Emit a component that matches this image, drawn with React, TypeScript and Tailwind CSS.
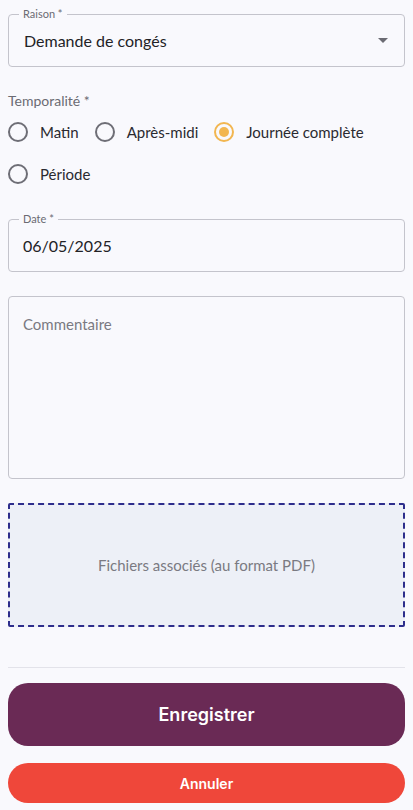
import { useState } from "react";

const font = "font-['Lato','Noto_Sans',sans-serif]";

function OutlinedField({ label, children, className = "" }: { label: string; children: React.ReactNode; className?: string }) {
  return (
    <div className={`relative rounded border border-[#c4c4cc] ${className}`}>
      <span className="absolute -top-[8px] left-[10px] bg-[#f9f9fd] px-[4px] text-[11px] leading-[14px] text-[#6b6b73]">
        {label}
      </span>
      {children}
    </div>
  );
}

function Radio({ label, checked, onClick }: { label: string; checked: boolean; onClick: () => void }) {
  return (
    <button type="button" onClick={onClick} className="flex items-center gap-[12px]">
      <span
        className={`flex h-[20px] w-[20px] items-center justify-center rounded-full border-2 ${
          checked ? "border-[#f2b650]" : "border-[#6e6e76]"
        }`}
      >
        {checked && <span className="h-[10px] w-[10px] rounded-full bg-[#f2b650]" />}
      </span>
      <span className="text-[15px] text-[#2a2a30]">{label}</span>
    </button>
  );
}

export default function App() {
  const [period, setPeriod] = useState("full");
  const options = [
    { id: "am", label: "Matin" },
    { id: "pm", label: "Après-midi" },
    { id: "full", label: "Journée complète" },
    { id: "range", label: "Période" },
  ];

  return (
    <div className={`min-h-[810px] bg-[#f9f9fd] px-[8px] pt-[14px] ${font}`}>
      <OutlinedField label="Raison *" className="h-[53px]">
        <div className="flex h-full items-center justify-between pl-[15px] pr-[16px]">
          <span className="text-[16px] text-[#222226]">Demande de congés</span>
          <svg width="10" height="5" viewBox="0 0 10 5">
            <path d="M0 0h10L5 5z" fill="#6b6b73" />
          </svg>
        </div>
      </OutlinedField>

      <div className="mt-[25px] text-[14px] leading-[18px] text-[#6b6b73]">Temporalité *</div>
      <div className="mt-[11px] flex flex-wrap gap-x-[16px] gap-y-[19px]">
        {options.map((o) => (
          <Radio key={o.id} label={o.label} checked={period === o.id} onClick={() => setPeriod(o.id)} />
        ))}
      </div>

      <OutlinedField label="Date *" className="mt-[34px] h-[53px]">
        <div className="flex h-full items-center pl-[14px] text-[16px] text-[#222226]">06/05/2025</div>
      </OutlinedField>

      <textarea
        placeholder="Commentaire"
        className="mt-[24px] block h-[183px] w-full resize-none rounded border border-[#c4c4cc] bg-transparent px-[14px] py-[16px] text-[15px] text-[#222226] outline-none placeholder:text-[#7a7a82]"
      />

      <div className="mt-[24px] flex h-[124px] items-center justify-center rounded-[2px] border-2 border-dashed border-[#2e2e8c] bg-[#edf0f7] text-[15px] text-[#7a7a82]">
        Fichiers associés (au format PDF)
      </div>

      <div className="mt-[40px] h-px bg-[#e3e3ea]" />

      <div className="font-['Inter',sans-serif]">
        <button
          type="button"
          className="mt-[15px] flex h-[63px] w-full items-center justify-center rounded-[20px] bg-[#6a2a55] text-[18px] font-semibold text-white"
        >
          Enregistrer
        </button>
        <button
          type="button"
          className="mt-[17px] flex h-[40px] w-full items-center justify-center rounded-full bg-[#ef473a] text-[14px] font-semibold text-white"
        >
          Annuler
        </button>
      </div>
    </div>
  );
}
